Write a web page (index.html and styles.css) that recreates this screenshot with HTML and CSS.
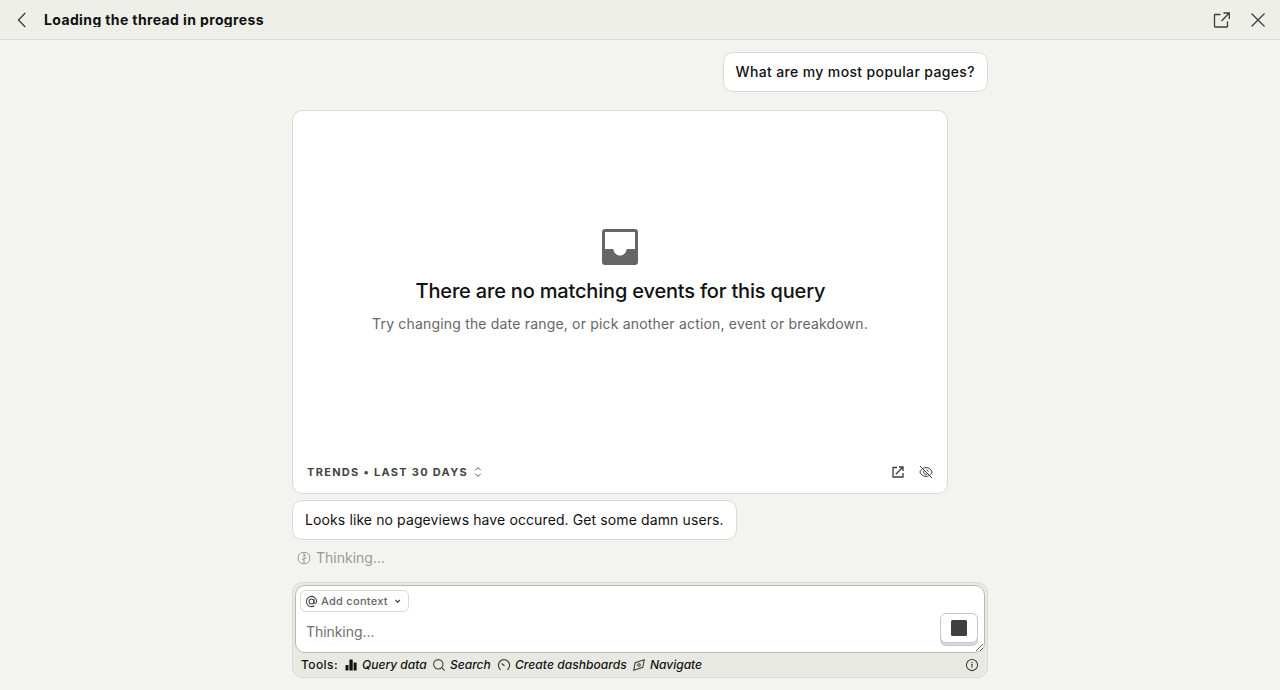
FILE: index.html
```html
<!DOCTYPE html>
<html lang="en">
<head>
<meta charset="utf-8">
<title>Loading the thread in progress</title>
<link rel="stylesheet" href="styles.css">
</head>
<body>
<header class="topbar">
  <svg class="icon back" viewBox="0 0 20 20"><path d="M13.200 3 6.500 10l6.700 7"/></svg>
  <h1 class="title">Loading the thread in progress</h1>
  <svg class="icon open" viewBox="0 0 20 20"><path d="M8.500 4.500H3.200a.7.7 0 0 0-.7.700v11.100c0 .4.3.7.7.700h11.600a.7.7 0 0 0 .7-.7V11.500M11.500 3H17.300V9M17 3.300 9.500 11"/></svg>
  <svg class="icon close" viewBox="0 0 20 20"><path d="M3.500 3.500l13 13M16.500 3.500l-13 13"/></svg>
</header>
<main class="thread">
  <div class="bubble human">What are my most popular pages?</div>
  <section class="card">
    <div class="empty">
      <svg class="tray" viewBox="0 0 36 36"><path fill-rule="evenodd" d="M3 0H33a3 3 0 0 1 3 3V33a3 3 0 0 1-3 3H3a3 3 0 0 1-3-3V3a3 3 0 0 1 3-3ZM3 3V20h8.300c.6 4 3.200 6.500 6.700 6.500s6.100-2.500 6.700-6.500H33V3Z"/></svg>
      <h2 class="empty-title">There are no matching events for this query</h2>
      <p class="empty-text">Try changing the date range, or pick another action, event or breakdown.</p>
    </div>
    <footer class="card-footer">
      <span class="range">TRENDS • LAST 30 DAYS</span>
      <svg class="icon small updown" viewBox="0 0 14 14"><path d="M4.300 5.300 7 2.600 9.700 5.300M4.300 8.700 7 11.400 9.700 8.700"/></svg>
      <svg class="icon small launch" viewBox="0 0 14 14"><path d="M6 2.500H2v9.500H12V8M8 2H12V6M12 2 4.800 9.200"/></svg>
      <svg class="icon small eye" viewBox="0 0 14 14"><path d="M1 1l12 12M4.300 3.200C5.100 2.800 6 2.600 7 2.600c3 0 5.100 1.700 6.100 4.400-.4 1.100-1.100 2-2 2.800M9.800 10.700c-.8.400-1.700.7-2.800.7-3 0-5.100-1.700-6.100-4.400.4-1.100 1.100-2 2-2.800M5.200 5.500a2.300 2.300 0 0 0 3.300 3.200M7.500 4.800a2.300 2.300 0 0 1 1.700 1.800"/></svg>
    </footer>
  </section>
  <div class="bubble reply">Looks like no pageviews have occured. Get some damn users.</div>
  <div class="thinking">
    <svg class="icon small" viewBox="0 0 14 14"><path d="M7 1.300v11.400M4.500 1.600 1.300 4.200v5.600l3.200 2.600L7 12.700l2.500-.3 3.200-2.600V4.200L9.500 1.600 7 1.300ZM7 5l2-1M7 9 5 8M7 7.500l2.500-.7"/></svg>
    <span>Thinking...</span>
  </div>
  <section class="composer">
    <div class="field">
      <button class="context">
        <svg class="icon at" viewBox="0 0 14 14"><circle cx="7" cy="7" r="2.600"/><path d="M9.600 4.400v3.300c0 2 2.900 1.700 2.900-.7A5.500 5.500 0 1 0 10 11.600"/></svg>
        <span class="context-label">Add context</span>
        <svg class="icon chevron" viewBox="0 0 10 10"><path d="M2.500 4 4.700 6.200 6.900 4"/></svg>
      </button>
      <textarea class="input" placeholder="Thinking..."></textarea>
      <button class="stop" aria-label="Stop"><span class="stop-square"></span></button>
    </div>
    <div class="tools">
      <span class="tools-label">Tools:</span>
      <svg class="icon small bars" viewBox="0 0 14 14"><path d="M1.500 7.500a.5.500 0 0 1 .5-.5h2.500v5.600H1.500zM5.400 2a.5.500 0 0 1 .5-.5h2.300a.5.500 0 0 1 .5.500v10.600H5.400zM9.600 4.500h2.500a.5.500 0 0 1 .5.500v7.600h-3z"/></svg>
      <em class="tool query">Query data</em>
      <svg class="icon small" viewBox="0 0 14 14"><circle cx="6.300" cy="6.300" r="4.700"/><path d="m9.700 9.700 3 3"/></svg>
      <em class="tool search">Search</em>
      <svg class="icon small gauge" viewBox="0 0 14 14"><path d="M3.600 11.900 2.700 10.900a5.600 5.600 0 1 1 8.600 0L10.400 11.900M7.500 7.800 4.700 5.500"/></svg>
      <em class="tool create">Create dashboards</em>
      <svg class="icon small" viewBox="0 0 14 14"><path d="M12.300 1.700 10.800 9.300 1.700 12.300 3.200 4.700Z"/><circle cx="7" cy="7" r="1.300"/></svg>
      <em class="tool navigate">Navigate</em>
      <svg class="icon small info" viewBox="0 0 14 14"><circle cx="7" cy="7" r="5.600"/><path d="M6 6.500h1v3.300M7 4v1.200"/></svg>
    </div>
  </section>
</main>
</body>
</html>
```
FILE: styles.css
```css
* { box-sizing: border-box; }
body { margin: 0; height: 690px; overflow: hidden; background: #f3f4ef; color: #111; font: 14px/20px Inter, sans-serif; }
h1, h2, p { margin: 0; }
.icon { display: block; flex: none; width: 20px; height: 20px; fill: none; stroke: #3c3c3a; stroke-width: 1.3; }
.small { width: 14px; height: 14px; stroke-width: 1.05; }
.topbar { display: flex; align-items: center; height: 40px; padding: 0 12px; background: #eeefe9; border-bottom: 1px solid #dadbd4; }
.title { margin-left: 12px; height: 14px; overflow: hidden; font-size: 14px; line-height: 14px; font-weight: 700; letter-spacing: .38px; white-space: nowrap; }
.open { margin-left: auto; }
.close { margin-left: 16px; }
.thread { display: flex; flex-direction: column; align-items: flex-start; width: 696px; margin: 12px auto 0; }
.bubble { height: 40px; padding: 9px 12px; background: #fff; border: 1px solid #dadbd2; border-radius: 10px; white-space: nowrap; }
.human { align-self: flex-end; margin-bottom: 18px; font-weight: 500; letter-spacing: .36px; }
.reply { letter-spacing: .11px; }
.card { display: flex; flex-direction: column; width: 656px; height: 384px; margin-bottom: 6px; background: #fff; border: 1px solid #dadbd2; border-radius: 10px; }
.empty { flex: 1; display: flex; flex-direction: column; align-items: center; padding-top: 118px; }
.tray { width: 36px; height: 36px; fill: #666; }
.empty-title { margin: 12px 0 0 1px; font-size: 20px; line-height: 28px; font-weight: 500; letter-spacing: -.18px; white-space: nowrap; }
.empty-text { margin-top: 9px; color: #666; letter-spacing: .18px; white-space: nowrap; }
.card-footer { display: flex; align-items: center; height: 42px; padding: 0 14px; }
.range { font-size: 11px; font-weight: 700; letter-spacing: 1.3px; color: #444; }
.updown { margin-left: 3px; stroke-width: .9; }
.launch { margin: 0 14px 0 auto; stroke-width: 1.3; }
.eye { stroke-width: 1; }
.thinking { display: flex; align-items: center; gap: 5px; height: 36px; padding-left: 5px; color: #999a97; }
.thinking .icon { stroke: #92938f; stroke-width: .9; }
.composer { width: 696px; height: 96px; margin-top: 6px; padding: 2px; background: #e8e9e3; border: 1px solid #dadbd2; border-radius: 10px; }
.field { position: relative; height: 68px; }
.input { display: block; width: 690px; height: 68px; padding: 36px 50px 0 10px; border: 1px solid #b8b9b4; border-radius: 10px; outline: 0; resize: vertical; background: #fff; font: inherit; letter-spacing: -.06px; }
.input::placeholder { color: #707070; opacity: 1; }
.context { position: absolute; top: 5px; left: 5px; display: flex; align-items: center; width: 109px; height: 22px; padding: 0 5px 0 4px; background: #fff; border: 1px solid #dadbd2; border-radius: 6px; }
.context-label { margin-left: 3px; font: 500 11px/16px Inter, sans-serif; letter-spacing: .28px; color: #666; white-space: nowrap; }
.at { width: 13px; height: 13px; stroke-width: 1.1; }
.chevron { width: 10px; height: 10px; margin-left: auto; stroke-width: 1.1; }
.stop { position: absolute; top: 28px; right: 7px; display: flex; align-items: center; justify-content: center; width: 38px; height: 30px; padding: 0; background: #fff; border: 1px solid #c8c8c8; border-radius: 6px; box-shadow: 0 3px 0 -1px #d8d8d8, 0 3px 0 #c8c8c8; }
.stop-square { width: 16px; height: 16px; border-radius: 1.5px; background: #404040; }
.tools { display: flex; align-items: center; height: 24px; padding: 0 6px; font-size: 12px; line-height: 16px; font-weight: 500; white-space: nowrap; }
.tools-label { width: 43px; letter-spacing: .4px; }
.tools .icon { margin-right: 4px; }
.tools .bars { fill: #111; stroke: none; }
.gauge { stroke-width: 1.2; }
.query { width: 70px; }
.search { width: 47px; }
.create { width: 117px; letter-spacing: .06px; }
.tools .info { margin: 0 0 0 auto; }
```
